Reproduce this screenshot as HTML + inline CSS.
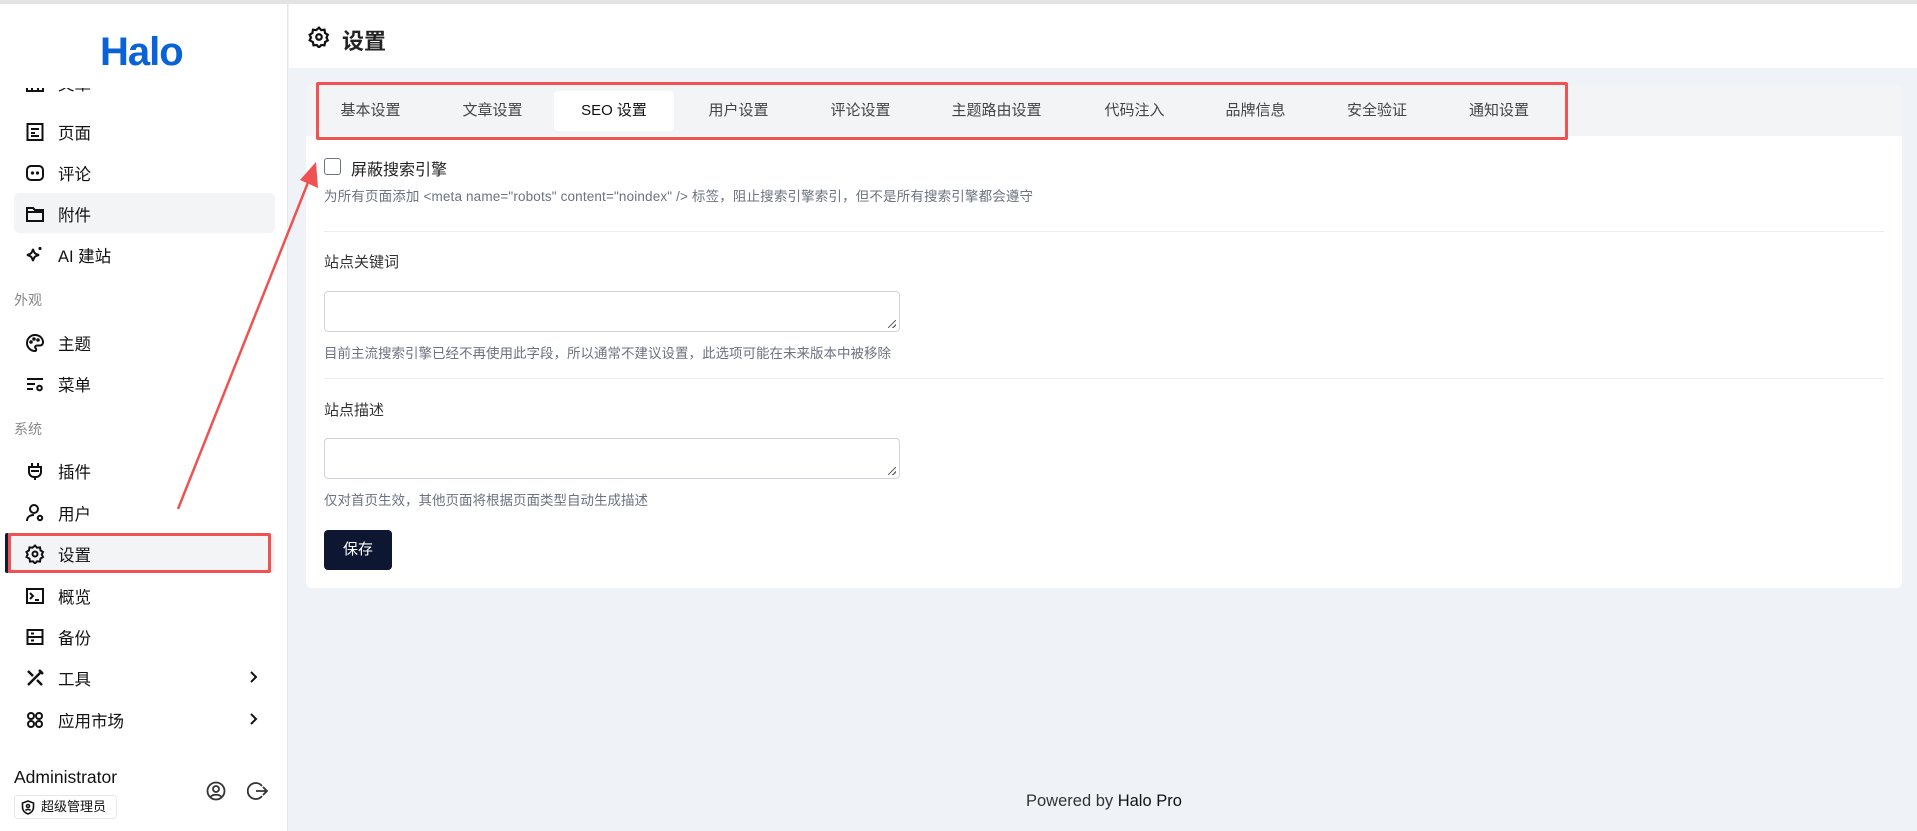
<!DOCTYPE html>
<html><head><meta charset="utf-8">
<style>
*{box-sizing:border-box;margin:0;padding:0}
body{width:1917px;height:831px;position:relative;overflow:hidden;background:#eff3f7;font-family:"Liberation Sans","Noto Sans CJK SC",sans-serif;color:#111}
.abs{position:absolute}
.topline{left:0;top:0;width:1917px;height:4px;background:#e3e3e3}
.side{left:0;top:4px;width:288px;height:827px;background:#fff;border-right:1px solid #e5e7eb}
.logo{left:100px;top:26px;font-size:40px;font-weight:bold;letter-spacing:-1px;color:#0a63d6;font-family:"Liberation Sans",sans-serif}
.item{position:absolute;left:14px;width:261px;height:40px;border-radius:5px;font-size:16.5px;color:#111}
.item svg{position:absolute;left:11px;top:11px}
.item span{position:absolute;left:44px;top:9px}
.grp{position:absolute;left:14px;font-size:14px;color:#888}
.hdr{left:289px;top:4px;width:1628px;height:64px;background:#fff}
.card{left:306px;top:85px;width:1596px;height:503px;background:#fff;border-radius:5px;overflow:hidden}
.tabbar{left:0;top:0;width:100%;height:51px;background:#f3f4f6}
.tab{position:absolute;top:0;height:51px;line-height:51px;font-size:15px;color:#444;text-align:center}
.help{font-size:13.5px;color:#6b7280}
.ta{position:absolute;left:18px;width:576px;height:41px;border:1px solid #d1d5db;border-radius:4px}
.ta:after{content:"";position:absolute;right:3px;bottom:3px;width:8px;height:8px;background:linear-gradient(135deg,transparent 45%,#666 45%,#666 55%,transparent 55%,transparent 75%,#666 75%,#666 85%,transparent 85%)}
.hr{position:absolute;left:18px;right:18px;height:1px;background:#eceef1}
</style></head><body>
<div class="abs topline"></div>
<div class="abs side">
  <div class="abs logo">Halo</div>
  <div class="abs" style="left:0;top:84px;width:287px;height:12px;overflow:hidden">
    <div class="item" style="top:-26px"><svg width="20" height="20" viewBox="0 0 20 20" fill="none" stroke="#111" stroke-width="2"><rect x="2" y="3" width="16" height="15"/><path d="M7 3v15M13 3v15"/></svg><span>文章</span></div>
  </div>
  <div class="item" style="top:107px"><svg width="20" height="20" viewBox="0 0 20 20" fill="none" stroke="#111" stroke-width="2"><rect x="2.5" y="2" width="15" height="16"/><path d="M6 7h8M6 11h4M6 14h8"/></svg><span>页面</span></div>
  <div class="item" style="top:148px"><svg width="20" height="20" viewBox="0 0 20 20" fill="none" stroke="#111" stroke-width="2"><rect x="2" y="3" width="16" height="14" rx="4"/><circle cx="7.5" cy="10" r=".6" fill="#111"/><circle cx="12.5" cy="10" r=".6" fill="#111"/></svg><span>评论</span></div>
  <div class="item" style="top:189px;background:#f3f4f6"><svg width="20" height="20" viewBox="0 0 20 20" fill="none" stroke="#111" stroke-width="2"><path d="M2 4h6l2 2h8v11H2zM2 8h16"/></svg><span>附件</span></div>
  <div class="item" style="top:230px"><svg width="20" height="20" viewBox="0 0 20 20" fill="none" stroke="#111" stroke-width="2"><path d="M8 4c1 4 2 5 6 6-4 1-5 2-6 6-1-4-2-5-6-6 4-1 5-2 6-6z"/><path d="M15 2v3M13.5 3.5h3"/></svg><span>AI 建站</span></div>
  <div class="grp" style="top:286px">外观</div>
  <div class="item" style="top:318px"><svg width="20" height="20" viewBox="0 0 20 20" fill="none" stroke="#111" stroke-width="2"><path d="M10 2a8 8 0 1 0 0 16c1.5 0 1.5-2 .5-3s0-2.5 1.5-2.5H15a3 3 0 0 0 3-3C18 5 14.5 2 10 2z"/><circle cx="6" cy="9" r=".8"/><circle cx="9" cy="6" r=".8"/><circle cx="13" cy="7" r=".8"/></svg><span>主题</span></div>
  <div class="item" style="top:359px"><svg width="20" height="20" viewBox="0 0 20 20" fill="none" stroke="#111" stroke-width="2"><path d="M2 5h16M2 10h8M2 15h6"/><circle cx="14.5" cy="14" r="2.3"/></svg><span>菜单</span></div>
  <div class="grp" style="top:415px">系统</div>
  <div class="item" style="top:446px"><svg width="20" height="20" viewBox="0 0 20 20" fill="none" stroke="#111" stroke-width="2"><path d="M7 2v4M13 2v4M4 6h12v5a5 5 0 0 1-5 5h-2a5 5 0 0 1-5-5zM10 16v3M6 10h8"/></svg><span>插件</span></div>
  <div class="item" style="top:488px"><svg width="20" height="20" viewBox="0 0 20 20" fill="none" stroke="#111" stroke-width="2"><circle cx="9" cy="6" r="4"/><path d="M2 18c0-4 3-6 7-6"/><circle cx="15" cy="15" r="2.2"/></svg><span>用户</span></div>
  <div class="abs" style="left:5px;top:529px;width:4px;height:40px;background:#111c34;border-radius:2px"></div>
  <div class="item" style="top:529px;left:10px;width:265px;background:#f3f4f6"><svg style="left:15px" width="20" height="20" viewBox="0 0 20 20" fill="none" stroke="#111" stroke-width="2"><path d="M10 1.5l2 2.2 3-.3.5 3 2.5 1.6-1.2 2.5 1.2 2.5-2.5 1.6-.5 3-3-.3-2 2.2-2-2.2-3 .3-.5-3L1.5 13l1.2-2.5L1.5 8 4 6.4l.5-3 3 .3z"/><circle cx="10" cy="10" r="2.5"/></svg><span style="left:48px">设置</span></div>
  <div class="abs" style="left:8px;top:529px;width:263px;height:40px;border:3px solid #f05252;border-radius:2px"></div>
  <div class="item" style="top:571px"><svg width="20" height="20" viewBox="0 0 20 20" fill="none" stroke="#111" stroke-width="2"><rect x="2" y="3" width="16" height="14"/><path d="M5 7l3 3-3 3M10 14h4"/></svg><span>概览</span></div>
  <div class="item" style="top:612px"><svg width="20" height="20" viewBox="0 0 20 20" fill="none" stroke="#111" stroke-width="2"><rect x="2.5" y="3" width="15" height="14"/><path d="M2.5 10h15M6 6.5h3M6 13.5h3"/></svg><span>备份</span></div>
  <div class="item" style="top:653px"><svg width="20" height="20" viewBox="0 0 20 20" fill="none" stroke="#111" stroke-width="2.4"><path d="M3 17L17 3M3 3l5 5M12 12l5 5M14 2l4 4"/></svg><span>工具</span><svg style="left:232px;top:13px" width="14" height="14" viewBox="0 0 14 14" fill="none" stroke="#111" stroke-width="2"><path d="M5 2l5 5-5 5"/></svg></div>
  <div class="item" style="top:695px"><svg width="20" height="20" viewBox="0 0 20 20" fill="none" stroke="#111" stroke-width="2"><circle cx="6" cy="6" r="3"/><circle cx="14" cy="6" r="3"/><circle cx="6" cy="14" r="3"/><circle cx="14" cy="14" r="3"/></svg><span>应用市场</span><svg style="left:232px;top:13px" width="14" height="14" viewBox="0 0 14 14" fill="none" stroke="#111" stroke-width="2"><path d="M5 2l5 5-5 5"/></svg></div>
  <div class="abs" style="left:14px;top:763px;font-size:17.5px">Administrator</div>
  <div class="abs" style="left:14px;top:791px;width:103px;height:24px;border:1px solid #e5e7eb;border-radius:4px;font-size:13px;line-height:22px;padding-left:26px">超级管理员<svg style="position:absolute;left:6px;top:4px" width="14" height="15" viewBox="0 0 14 15" fill="none" stroke="#111" stroke-width="1.6"><path d="M7 1l5.5 2v4c0 3.5-2.5 6-5.5 7C4 13 1.5 10.5 1.5 7V3z"/><circle cx="7" cy="6" r="1.5"/><path d="M4.5 10.5c1-1.5 4-1.5 5 0"/></svg></div>
  <svg class="abs" style="left:206px;top:777px" width="20" height="20" viewBox="0 0 20 20" fill="none" stroke="#333" stroke-width="1.8"><circle cx="10" cy="10" r="8.5"/><circle cx="10" cy="8" r="3"/><path d="M4.5 16c2-3 9-3 11 0"/></svg>
  <svg class="abs" style="left:247px;top:777px" width="21" height="20" viewBox="0 0 21 20" fill="none" stroke="#333" stroke-width="1.8"><path d="M15 5a8 8 0 1 0 0 10M9 10h11M16 6l4 4-4 4"/></svg>
</div>
<div class="abs hdr">
  <svg class="abs" style="left:19px;top:22px" width="22" height="22" viewBox="0 0 20 20" fill="none" stroke="#111" stroke-width="2"><path d="M10 1.5l2 2.2 3-.3.5 3 2.5 1.6-1.2 2.5 1.2 2.5-2.5 1.6-.5 3-3-.3-2 2.2-2-2.2-3 .3-.5-3L1.5 13l1.2-2.5L1.5 8 4 6.4l.5-3 3 .3z"/><circle cx="10" cy="10" r="2.5"/></svg>
  <div class="abs" style="left:53px;top:20px;font-size:22px;font-weight:bold;color:#222">设置</div>
</div>
<div class="abs card">
  <div class="abs tabbar"></div>
  <div class="abs" style="left:248px;top:6px;width:120px;height:40px;background:#fff;border-radius:4px"></div>
  <div class="tab" style="left:4px;width:121px">基本设置</div>
  <div class="tab" style="left:125px;width:123px">文章设置</div>
  <div class="tab" style="left:248px;width:120px;color:#111">SEO 设置</div>
  <div class="tab" style="left:371px;width:123px">用户设置</div>
  <div class="tab" style="left:494px;width:121px">评论设置</div>
  <div class="tab" style="left:615px;width:151px">主题路由设置</div>
  <div class="tab" style="left:768px;width:121px">代码注入</div>
  <div class="tab" style="left:889px;width:121px">品牌信息</div>
  <div class="tab" style="left:1010px;width:122px">安全验证</div>
  <div class="tab" style="left:1132px;width:122px">通知设置</div>
  <div class="abs" style="left:18px;top:73px;width:17px;height:17px;border:1.5px solid #6b7280;border-radius:3px"></div>
  <div class="abs" style="left:45px;top:71px;font-size:16px;color:#222">屏蔽搜索引擎</div>
  <div class="abs help" style="left:18px;top:100px;letter-spacing:.15px">为所有页面添加 &lt;meta name="robots" content="noindex" /&gt; 标签，阻止搜索引擎索引，但不是所有搜索引擎都会遵守</div>
  <div class="hr" style="top:146px"></div>
  <div class="abs" style="left:18px;top:166px;font-size:15px;color:#333">站点关键词</div>
  <div class="ta" style="top:206px"></div>
  <div class="abs help" style="left:18px;top:257px">目前主流搜索引擎已经不再使用此字段，所以通常不建议设置，此选项可能在未来版本中被移除</div>
  <div class="hr" style="top:293px"></div>
  <div class="abs" style="left:18px;top:314px;font-size:15px;color:#333">站点描述</div>
  <div class="ta" style="top:353px"></div>
  <div class="abs help" style="left:18px;top:404px">仅对首页生效，其他页面将根据页面类型自动生成描述</div>
  <div class="abs" style="left:18px;top:445px;width:68px;height:40px;background:#0e1731;border-radius:4px;color:#fff;font-size:15px;line-height:40px;text-align:center">保存</div>
</div>
<div class="abs" style="left:316px;top:82px;width:1252px;height:58px;border:3px solid #f05252;border-radius:2px"></div>
<div class="abs" style="left:1026px;top:792px;font-size:16.5px;color:#333">Powered by <span style="color:#111">Halo Pro</span></div>
<svg class="abs" style="left:0;top:0" width="400" height="600" viewBox="0 0 400 600"><line x1="178" y1="509" x2="309" y2="180" stroke="#f05252" stroke-width="2.5"/><path d="M316 162l2 26-18-8z" fill="#f05252"/></svg>
</body></html>
